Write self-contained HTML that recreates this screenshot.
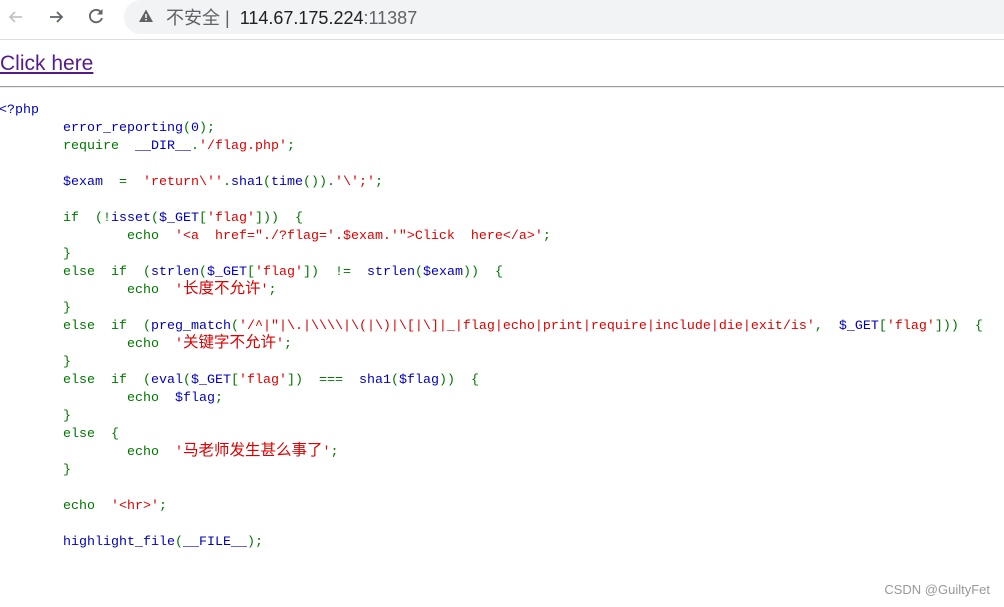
<!DOCTYPE html>
<html><head><meta charset="utf-8"><style>
html,body{margin:0;padding:0;background:#fff;width:1004px;height:607px;overflow:hidden;position:relative}
.bar{position:absolute;left:0;top:0;width:1004px;height:39px;background:#fff;border-bottom:1px solid #dadce0}
.omni{position:absolute;left:124px;top:0;width:880px;height:34px;background:#f1f3f4;border-radius:17px 0 0 17px}
.url{position:absolute;left:166px;top:4px;font:18px "Liberation Sans","Noto Sans CJK SC",sans-serif;color:#202124;white-space:pre}
.url .g{color:#5f6368}
.link{position:absolute;left:0;top:52px;font:21px "Liberation Sans",sans-serif;color:#551a8b;text-decoration:underline}
.hr{position:absolute;left:0;top:86px;width:1004px;height:0;border-top:1px solid #9a9a9a;border-bottom:1px solid #eee}
pre{position:absolute;left:-1px;top:102px;margin:0;font:13.33px/18px "Liberation Mono","Noto Sans CJK SC",monospace;tab-size:8;color:#0000BB}
.k{color:#007700}.s{color:#DD0000}.b{color:#0000BB}
.c{font-family:"Noto Sans CJK SC",sans-serif;font-size:15.5px;line-height:0}
.wm{position:absolute;right:14px;top:582px;font:13px "Liberation Sans",sans-serif;color:#999}
</style></head><body>
<div class="bar">
<svg style="position:absolute;left:6px;top:7px" width="20" height="20" viewBox="0 0 20 20"><path d="M16 10H4M9 5L4 10l5 5" stroke="#c4c4c4" stroke-width="1.8" fill="none"/></svg>
<svg style="position:absolute;left:46px;top:7px" width="20" height="20" viewBox="0 0 20 20"><path d="M4 10h12M11 5l5 5-5 5" stroke="#5f6368" stroke-width="1.8" fill="none"/></svg>
<svg style="position:absolute;left:86px;top:6px" width="20" height="20" viewBox="0 0 20 20"><path d="M15.5 7A6.2 6.2 0 1 0 16 12" stroke="#5f6368" stroke-width="1.8" fill="none"/><path d="M16.5 3v5.5h-5.5z" fill="#5f6368"/></svg>
<div class="omni"></div>
<svg style="position:absolute;left:138px;top:8px" width="16" height="16" viewBox="0 0 16 16"><path d="M8 1.5L15 14H1z" fill="#5f6368"/><rect x="7.2" y="6" width="1.6" height="4" fill="#f1f3f4"/><rect x="7.2" y="11" width="1.6" height="1.5" fill="#f1f3f4"/></svg>
<div class="url"><span class="g">不安全 |  </span>114.67.175.224<span class="g">:11387</span></div>
</div>
<div class="link">Click here</div>
<div class="hr"></div>
<pre>&lt;?php
	error_reporting<span class="k">(</span>0<span class="k">);
	require  </span>__DIR__<span class="k">.</span><span class="s">'/flag.php'</span><span class="k">;</span>

	$exam  <span class="k">=  </span><span class="s">'return\''</span><span class="k">.</span>sha1<span class="k">(</span>time<span class="k">()).</span><span class="s">'\';'</span><span class="k">;

	if  (!</span>isset<span class="k">(</span>$_GET<span class="k">[</span><span class="s">'flag'</span><span class="k">]))  {
		echo  </span><span class="s">'&lt;a  href="./?flag='.$exam.'"&gt;Click  here&lt;/a&gt;'</span><span class="k">;
	}
	else  if  (</span>strlen<span class="k">(</span>$_GET<span class="k">[</span><span class="s">'flag'</span><span class="k">])  !=  </span>strlen<span class="k">(</span>$exam<span class="k">))  {
		echo  </span><span class="s">'<span class="c">长度不允许</span>'</span><span class="k">;
	}
	else  if  (</span>preg_match<span class="k">(</span><span class="s">'/^|"|\.|\\\\|\(|\)|\[|\]|_|flag|echo|print|require|include|die|exit/is'</span><span class="k">,  </span>$_GET<span class="k">[</span><span class="s">'flag'</span><span class="k">]))  {
		echo  </span><span class="s">'<span class="c">关键字不允许</span>'</span><span class="k">;
	}
	else  if  (</span>eval<span class="k">(</span>$_GET<span class="k">[</span><span class="s">'flag'</span><span class="k">])  ===  </span>sha1<span class="k">(</span>$flag<span class="k">))  {
		echo  </span>$flag<span class="k">;
	}
	else  {
		echo  </span><span class="s">'<span class="c">马老师发生甚么事了</span>'</span><span class="k">;
	}

	echo  </span><span class="s">'&lt;hr&gt;'</span><span class="k">;

	</span>highlight_file<span class="k">(</span>__FILE__<span class="k">);</span>
</pre>
<div class="wm">CSDN @GuiltyFet</div>
</body></html>
